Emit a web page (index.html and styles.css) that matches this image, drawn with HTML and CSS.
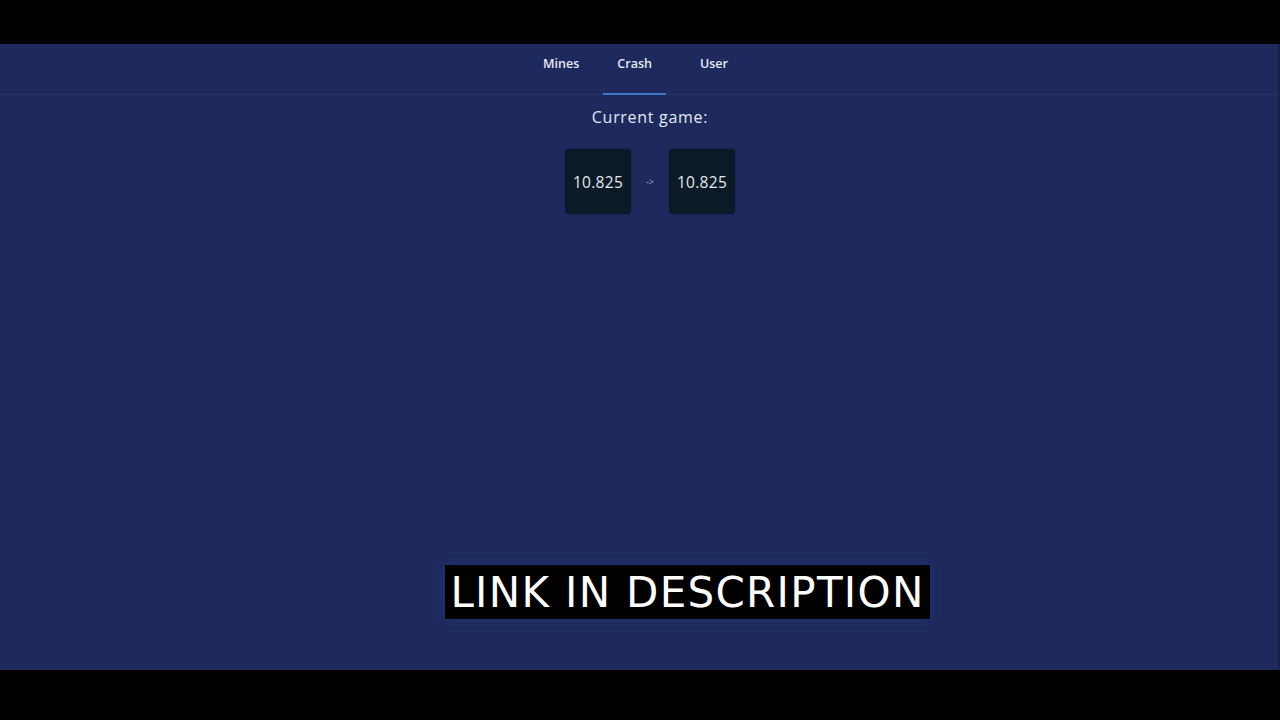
FILE: index.html
```html
<!DOCTYPE html>
<html>
<head>
<meta charset="utf-8">
<link rel="stylesheet" href="styles.css">
</head>
<body>
<div class="screen">
  <div class="bar-top"></div>
  <div class="app">
    <nav class="tabs">
      <div class="tab">Mines</div>
      <div class="tab active">Crash</div>
      <div class="tab tab-user">User</div>
    </nav>
    <section class="game">
      <div class="title">Current game:</div>
      <div class="values">
        <div class="box">10.825</div>
        <div class="arrow">-&gt;</div>
        <div class="box">10.825</div>
      </div>
    </section>
    <div class="caption">LINK IN DESCRIPTION</div>
  </div>
  <div class="bar-bottom"></div>
</div>
</body>
</html>
```
FILE: styles.css
```css
html, body {
  margin: 0;
  padding: 0;
  background: #000;
}
.screen {
  width: 1280px;
  height: 720px;
  display: flex;
  flex-direction: column;
  font-family: "Open Sans", "Noto Sans", sans-serif;
}
.bar-top {
  height: 44px;
  background: #000;
}
.bar-bottom {
  height: 50px;
  background: #000;
}
.app {
  position: relative;
  height: 626px;
  background: #1e2a5e;
  border-right: 2px solid #17224c;
  box-sizing: border-box;
}
.tabs {
  height: 50px;
  display: flex;
  justify-content: center;
  align-items: stretch;
  border-bottom: 1px solid #253369;
  padding-right: 7px;
}
.tab {
  padding: 0 14px 10px;
  display: flex;
  align-items: center;
  box-sizing: border-box;
  font-size: 12.5px;
  font-weight: 600;
  color: #e6e9f2;
  margin-right: 10px;
  border-bottom: 2px solid transparent;
  margin-bottom: -1px;
}
.tab.active {
  border-bottom-color: #3b78c8;
  margin-right: 20px;
}
.tab-user {
  margin-right: 0;
}
.game {
  display: flex;
  flex-direction: column;
  align-items: center;
  padding-left: 22px;
  padding-top: 12px;
}
.title {
  font-size: 16px;
  color: #e4e8ef;
  line-height: 20px;
  letter-spacing: 0.7px;
}
.values {
  display: flex;
  align-items: center;
  margin-top: 22px;
  gap: 12px;
}
.box {
  width: 66px;
  height: 65px;
  border-radius: 4px;
  background: #0b1a26;
  color: #e2e8ec;
  font-size: 15.5px;
  letter-spacing: 0.3px;
  display: flex;
  align-items: center;
  justify-content: center;
  box-shadow: 0 0 2px rgba(0,0,0,0.4);
}
.arrow {
  width: 14px;
  text-align: center;
  font-size: 9px;
  color: #9fb0dd;
}
.caption {
  position: absolute;
  left: 445px;
  top: 521px;
  width: 485px;
  height: 54px;
  padding-top: 2px;
  box-sizing: border-box;
  background: #000;
  color: #fff;
  font-family: "DejaVu Sans", sans-serif;
  font-size: 42px;
  line-height: 52px;
  text-align: center;
  letter-spacing: 1.3px;
  box-shadow: 0 -3px 8px rgba(50,100,180,0.15), 0 3px 8px rgba(50,100,180,0.15);
}
```
